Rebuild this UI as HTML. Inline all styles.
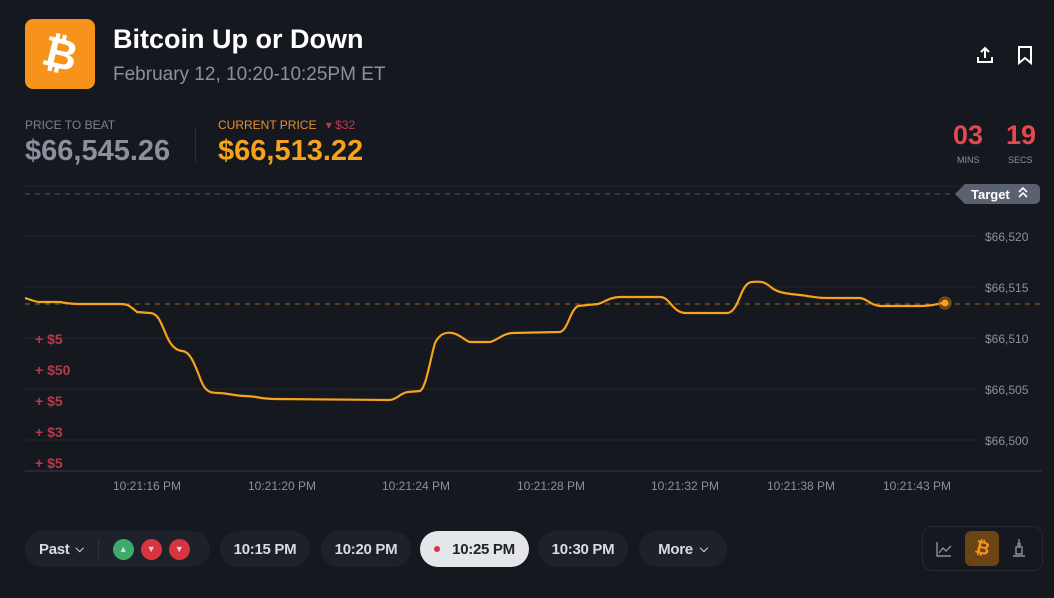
<!DOCTYPE html>
<html><head><meta charset="utf-8"><style>
*{margin:0;padding:0;box-sizing:border-box}
body{width:1054px;height:598px;background:#15181f;font-family:"Liberation Sans",sans-serif;position:relative;overflow:hidden;color:#fff}
.a{position:absolute}
.pill{position:absolute;top:531px;height:36px;border-radius:18px;background:#1d2129;color:#d8dbe0;font-weight:bold;font-size:15px;display:flex;align-items:center;justify-content:center;letter-spacing:-0.3px}
.dot{width:21px;height:21px;border-radius:50%;display:inline-flex;align-items:center;justify-content:center}
</style></head><body>
<div class="a" style="left:25px;top:19px;width:70px;height:70px;border-radius:8px;background:#f7931a;display:flex;align-items:center;justify-content:center;color:#fff;font-weight:bold;font-size:42px"><span style="display:inline-block;transform:rotate(14deg)">₿</span></div>
<div class="a" style="left:113px;top:24px;font-size:27px;font-weight:bold;color:#fff">Bitcoin Up or Down</div>
<div class="a" style="left:113px;top:64px;font-size:19px;color:#8a919c">February 12, 10:20-10:25PM ET</div>
<svg class="a" style="left:975px;top:45px" width="20" height="20" viewBox="0 0 20 20" fill="none" stroke="#fff" stroke-width="2"><path d="M10 13V3M6 7l4-4 4 4M3 12v5h14v-5"/></svg>
<svg class="a" style="left:1016px;top:45px" width="18" height="20" viewBox="0 0 18 20" fill="none" stroke="#fff" stroke-width="2"><path d="M3 2h12v16l-6-5-6 5z"/></svg>
<div class="a" style="left:25px;top:118px;font-size:12px;color:#7b828d">PRICE TO BEAT</div>
<div class="a" style="left:25px;top:135px;font-size:29px;font-weight:bold;color:#8a919c">$66,545.26</div>
<div class="a" style="left:195px;top:128px;width:1px;height:34px;background:#2a2e36"></div>
<div class="a" style="left:218px;top:118px;font-size:12px;color:#e8902a">CURRENT PRICE <span style="color:#c0394a;margin-left:6px">▾ $32</span></div>
<div class="a" style="left:218px;top:135px;font-size:29px;font-weight:bold;color:#f7a21b">$66,513.22</div>
<div class="a" style="left:953px;top:120px;font-size:27px;font-weight:bold;color:#e5484d">03</div>
<div class="a" style="left:1006px;top:120px;font-size:27px;font-weight:bold;color:#e5484d;height:30px;overflow:hidden">19</div>
<div class="a" style="left:957px;top:155px;font-size:9px;color:#8a919c">MINS</div>
<div class="a" style="left:1008px;top:155px;font-size:9px;color:#8a919c">SECS</div>
<svg class="a" style="left:0;top:0" width="1054" height="520">
<line x1="25" y1="186" x2="1040" y2="186" stroke="#22262e"/>
<line x1="25" y1="194" x2="955" y2="194" stroke="#555b66" stroke-dasharray="5 5"/>
<path d="M955 194l10-10h70a5 5 0 0 1 5 5v10a5 5 0 0 1-5 5h-70z" fill="#5a6270"/>
<text x="971" y="199" font-size="13" font-weight="bold" fill="#fff" font-family="Liberation Sans">Target</text>
<path d="M1019 192l4-4 4 4M1019 197l4-4 4 4" stroke="#fff" stroke-width="1.6" fill="none"/>
<g stroke="#22262e"><line x1="25" y1="236" x2="977" y2="236"/><line x1="25" y1="287" x2="977" y2="287"/><line x1="25" y1="338" x2="977" y2="338"/><line x1="25" y1="389" x2="977" y2="389"/><line x1="25" y1="440" x2="977" y2="440"/></g>
<line x1="25" y1="471" x2="1042" y2="471" stroke="#333841"/>
<line x1="25" y1="304" x2="1040" y2="304" stroke="#9a6a2a" stroke-dasharray="5 5"/>
<g font-family="Liberation Sans" font-size="12" fill="#8a919c"><text x="985" y="241">$66,520</text><text x="985" y="292">$66,515</text><text x="985" y="343">$66,510</text><text x="985" y="394">$66,505</text><text x="985" y="445">$66,500</text>
<text x="113" y="490">10:21:16 PM</text><text x="248" y="490">10:21:20 PM</text><text x="382" y="490">10:21:24 PM</text><text x="517" y="490">10:21:28 PM</text><text x="651" y="490">10:21:32 PM</text><text x="767" y="490">10:21:38 PM</text><text x="883" y="490">10:21:43 PM</text></g>
<g font-family="Liberation Sans" font-size="14" font-weight="bold" fill="#b8394a"><text x="35" y="344">+ $5</text><text x="35" y="375">+ $50</text><text x="35" y="406">+ $5</text><text x="35" y="437">+ $3</text><text x="35" y="468">+ $5</text></g>
<path d="M25 298C32 300 35 302 40 302L60 302C65 303 70 304 80 304L120 304C128 304 130 306 137 312L150 313C157 313 160 320 165 332C170 345 175 350 182 351C190 351 195 365 200 378C205 392 210 393 218 393C228 393 235 396 245 396C255 396 262 399 275 399L390 400C398 399 400 393 408 392L420 391C426 388 430 360 435 343C440 333 447 332 452 333C460 334 465 341 470 342L490 342C498 340 502 334 512 333L560 332C568 330 570 310 578 306L598 304C605 302 610 297 620 297L660 297C670 297 672 312 685 313L728 313C740 310 740 283 752 282C762 281 765 282 772 288C778 293 790 294 800 295C810 296 815 298 825 298L860 298C868 299 870 305 880 306L920 306C935 306 938 303 945 303" stroke="#f7a21b" stroke-width="2.2" fill="none"/>
<circle cx="945" cy="303" r="6" fill="#f7a21b" fill-opacity="0.3" stroke="#8a5a1a"/>
<circle cx="945" cy="303" r="3.5" fill="#f7a21b"/>
</svg>
<div class="pill" style="left:25px;width:185px;justify-content:flex-start;padding-left:14px">Past <span style="font-size:11px;margin-left:6px;margin-right:14px">⌵</span><span style="width:1px;height:20px;background:#333;margin-right:14px"></span>
<span class="dot" style="background:#3dab6a;font-size:9px">▲</span><span class="dot" style="background:#d8343f;margin-left:7px;font-size:9px">▼</span><span class="dot" style="background:#d8343f;margin-left:7px;font-size:9px">▼</span></div>
<div class="pill" style="left:220px;width:90px">10:15 PM</div>
<div class="pill" style="left:321px;width:90px">10:20 PM</div>
<div class="pill" style="left:420px;width:109px;background:#e4e6ea;color:#1d2129"><span style="width:6px;height:6px;border-radius:50%;background:#d8343f;margin-right:12px"></span>10:25 PM</div>
<div class="pill" style="left:538px;width:90px">10:30 PM</div>
<div class="pill" style="left:639px;width:88px">More <span style="font-size:11px;margin-left:7px">⌵</span></div>
<div class="a" style="left:922px;top:526px;width:121px;height:45px;border:1px solid #262a32;border-radius:10px"></div>
<svg class="a" style="left:935px;top:540px" width="18" height="18" viewBox="0 0 18 18" fill="none" stroke="#8a919c" stroke-width="1.4"><path d="M2 2v14h14M4 13l4-5 3 3 5-5"/></svg>
<div class="a" style="left:965px;top:531px;width:34px;height:35px;border-radius:6px;background:#6b4415;color:#f7931a;font-weight:bold;font-size:18px;display:flex;align-items:center;justify-content:center"><span style="display:inline-block;transform:rotate(14deg)">₿</span></div>
<svg class="a" style="left:1011px;top:538px" width="16" height="20" viewBox="0 0 16 20" fill="none" stroke="#8a919c" stroke-width="1.4"><path d="M8 1v4M5 9h6v7H5zM2 18h12"/><circle cx="8" cy="6.5" r="1.2"/></svg>
</body></html>
